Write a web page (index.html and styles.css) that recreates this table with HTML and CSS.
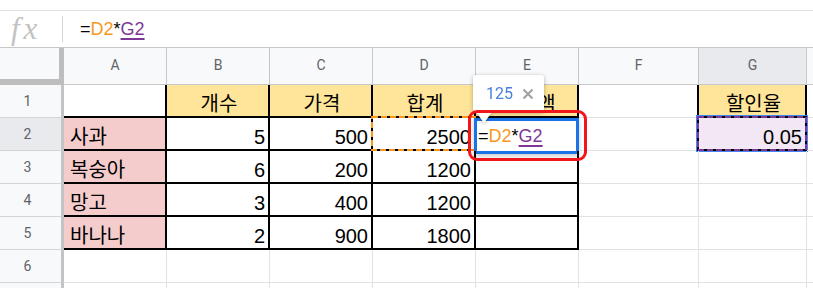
FILE: index.html
```html
<!DOCTYPE html>
<html lang="ko">
<head>
  <meta charset="UTF-8">
  <meta name="viewport" content="width=device-width, initial-scale=1.0">
  <title>할인액 계산</title>
  <link rel="stylesheet" href="styles.css">
</head>
<body>
  <div class="formula-bar">
    <span class="fx">fx</span>
    <span class="fx-divider"></span>
    <div class="formula">=<span class="ref-d">D2</span>*<span class="ref-g">G2</span></div>
  </div>

  <div class="sheet">
    <div class="corner"></div>
    <div class="col-head">A</div>
    <div class="col-head">B</div>
    <div class="col-head">C</div>
    <div class="col-head">D</div>
    <div class="col-head">E</div>
    <div class="col-head">F</div>
    <div class="col-head active">G</div>
    <div class="col-head"></div>

    <!-- row 1: headings -->
    <div class="row-head">1</div>
    <div class="cell edge-r edge-b"></div>
    <div class="cell box yellow center">개수</div>
    <div class="cell box yellow center">가격</div>
    <div class="cell box yellow center">합계</div>
    <div class="cell box yellow center">할인액</div>
    <div class="cell edge-r"></div>
    <div class="cell box yellow center">할인율</div>
    <div class="cell"></div>

    <!-- row 2: formula being typed in E2 -->
    <div class="row-head active">2</div>
    <div class="cell box pink">사과</div>
    <div class="cell box num">5</div>
    <div class="cell box num">500</div>
    <div class="cell box num">2500
      <svg class="ref-box ref-box-d" width="105" height="35">
        <rect x="1" y="1" width="103" height="33" fill="none" stroke="#000" stroke-width="2"/>
        <rect x="1" y="1" width="103" height="33" fill="none" stroke="#f7981d" stroke-width="2" stroke-dasharray="6 3"/>
      </svg>
    </div>
    <div class="cell box editing">
      <div class="editor">=<span class="ref-d">D2</span>*<span class="ref-g">G2</span></div>
      <div class="tip">
        <span class="tip-value">125</span>
        <svg class="tip-close" width="12" height="12" viewBox="0 0 12 12">
          <path d="M1.5 1.5 L10.5 10.5 M10.5 1.5 L1.5 10.5" stroke="#a3a3a3" stroke-width="2.2" fill="none"/>
        </svg>
      </div>
      <div class="mark"></div>
    </div>
    <div class="cell edge-r"></div>
    <div class="cell box num range">0.05
      <svg class="ref-box ref-box-g" width="112" height="37">
        <rect x="0.5" y="0.5" width="111" height="36" fill="none" stroke="#4285f4" stroke-width="1"/>
        <rect x="2" y="2" width="108" height="33" fill="none" stroke="#000" stroke-width="2"/>
        <rect x="2" y="2" width="108" height="33" fill="none" stroke="#7e3794" stroke-width="2" stroke-dasharray="6 3"/>
      </svg>
    </div>
    <div class="cell"></div>

    <div class="row-head">3</div>
    <div class="cell box pink">복숭아</div>
    <div class="cell box num">6</div>
    <div class="cell box num">200</div>
    <div class="cell box num">1200</div>
    <div class="cell box"></div>
    <div class="cell"></div>
    <div class="cell"></div>
    <div class="cell"></div>

    <div class="row-head">4</div>
    <div class="cell box pink">망고</div>
    <div class="cell box num">3</div>
    <div class="cell box num">400</div>
    <div class="cell box num">1200</div>
    <div class="cell box"></div>
    <div class="cell"></div>
    <div class="cell"></div>
    <div class="cell"></div>

    <div class="row-head">5</div>
    <div class="cell box pink">바나나</div>
    <div class="cell box num">2</div>
    <div class="cell box num">900</div>
    <div class="cell box num">1800</div>
    <div class="cell box"></div>
    <div class="cell"></div>
    <div class="cell"></div>
    <div class="cell"></div>

    <div class="row-head">6</div>
    <div class="cell"></div>
    <div class="cell"></div>
    <div class="cell"></div>
    <div class="cell"></div>
    <div class="cell"></div>
    <div class="cell"></div>
    <div class="cell"></div>
    <div class="cell"></div>

    <div class="row-head"></div>
    <div class="cell"></div>
    <div class="cell"></div>
    <div class="cell"></div>
    <div class="cell"></div>
    <div class="cell"></div>
    <div class="cell"></div>
    <div class="cell"></div>
    <div class="cell"></div>
  </div>
</body>
</html>
```

FILE: styles.css
```css
html, body {
  margin: 0;
  height: 288px;
  overflow: hidden;
  background: #fff;
}
body {
  font-family: "Liberation Sans", Arial, "Noto Sans CJK KR", sans-serif;
}

/* formula bar */
.formula-bar {
  display: flex;
  align-items: center;
  height: 36px;
  margin-top: 10px;
  border-top: 1px solid #e0e0e0;
  border-bottom: 1px solid #c7c7c7;
}
.fx {
  box-sizing: border-box;
  width: 62px;
  padding-left: 11px;
  font-family: "Liberation Serif", serif;
  font-style: italic;
  font-size: 31px;
  letter-spacing: 4px;
  color: #c2c2c2;
  line-height: 30px;
}
.fx-divider {
  width: 1px;
  height: 26px;
  background: #d4d4d4;
}
.formula {
  margin-left: 17px;
  font-size: 18px;
  line-height: 21px;
  color: #000;
}
.ref-d {
  color: #f7981d;
}
.ref-g {
  color: #7e3794;
  text-decoration: underline;
  text-decoration-thickness: 2px;
  text-underline-offset: 3px;
}

/* grid */
.sheet {
  display: grid;
  grid-template-columns: 64px repeat(5, 103px) 120px 108px 1fr;
  grid-template-rows: 37px repeat(7, 33px);
}
.corner {
  box-sizing: border-box;
  background: #f8f9fa;
  border-right: 5px solid #bdbdbd;
  border-bottom: 6px solid #bdbdbd;
}
.col-head {
  box-sizing: border-box;
  display: flex;
  align-items: center;
  justify-content: center;
  padding-bottom: 2px;
  background: #f8f9fa;
  border-right: 1px solid #c7c7c7;
  border-bottom: 1px solid #c7c7c7;
  font-family: Roboto, Arial, sans-serif;
  font-size: 14px;
  color: #5f6368;
}
.row-head {
  box-sizing: border-box;
  display: flex;
  align-items: center;
  justify-content: center;
  padding-right: 6px;
  background: #f8f9fa;
  border-right: 3px solid #c4c4c4;
  border-bottom: 1px solid #d4d4d4;
  font-family: Roboto, Arial, sans-serif;
  font-size: 14px;
  color: #5f6368;
}
.col-head.active,
.row-head.active {
  background: #e8eaed;
}

.cell {
  box-sizing: border-box;
  display: flex;
  align-items: flex-end;
  padding: 0 3px 0 6px;
  border-right: 1px solid #e2e2e2;
  border-bottom: 1px solid #e2e2e2;
  font-size: 20px;
  line-height: 23px;
  color: #000;
  white-space: nowrap;
  position: relative;
}
.box {
  border-right: 2px solid #000;
  border-bottom: 2px solid #000;
}
.edge-r {
  border-right: 2px solid #000;
}
.edge-b {
  border-bottom: 2px solid #000;
}
.num {
  justify-content: flex-end;
}
.center {
  justify-content: center;
}
.yellow {
  background: #ffe599;
}
.pink {
  background: #f4cccc;
}
.range {
  background: #f1e7f5;
}

/* dashed outlines of referenced cells */
.ref-box {
  position: absolute;
}
.ref-box-d {
  left: -2px;
  top: -2px;
}
.ref-box-g {
  left: -3px;
  top: -3px;
}

/* in-cell editor for E2 */
.editor {
  position: absolute;
  left: -2px;
  top: 0;
  box-sizing: border-box;
  width: 105px;
  height: 36px;
  display: flex;
  align-items: center;
  padding-left: 1px;
  background: #fff;
  border: 3px solid #1a73e8;
  box-shadow: 0 2px 5px rgba(0, 0, 0, 0.22);
  font-size: 18px;
  line-height: 21px;
}

/* value preview bubble */
.tip {
  position: absolute;
  left: -3px;
  top: -43px;
  box-sizing: border-box;
  width: 71px;
  height: 37px;
  display: flex;
  align-items: center;
  gap: 9px;
  padding-left: 13px;
  background: #fff;
  border-radius: 3px;
  filter: drop-shadow(0 1px 2px rgba(0, 0, 0, 0.3));
  z-index: 1;
}
.tip::after {
  content: "";
  position: absolute;
  left: 3px;
  top: 100%;
  border-left: 8px solid transparent;
  border-right: 8px solid transparent;
  border-top: 11px solid #fff;
}
.tip-value {
  font-family: Roboto, Arial, sans-serif;
  font-size: 16px;
  line-height: 18px;
  color: #4a80dc;
}
.tip-close {
  display: block;
}

/* red callout around the cell being edited */
.mark {
  position: absolute;
  left: -8px;
  top: -8px;
  box-sizing: border-box;
  width: 119px;
  height: 51px;
  border: 3px solid #f0161c;
  border-radius: 9px;
  z-index: 2;
}
```
